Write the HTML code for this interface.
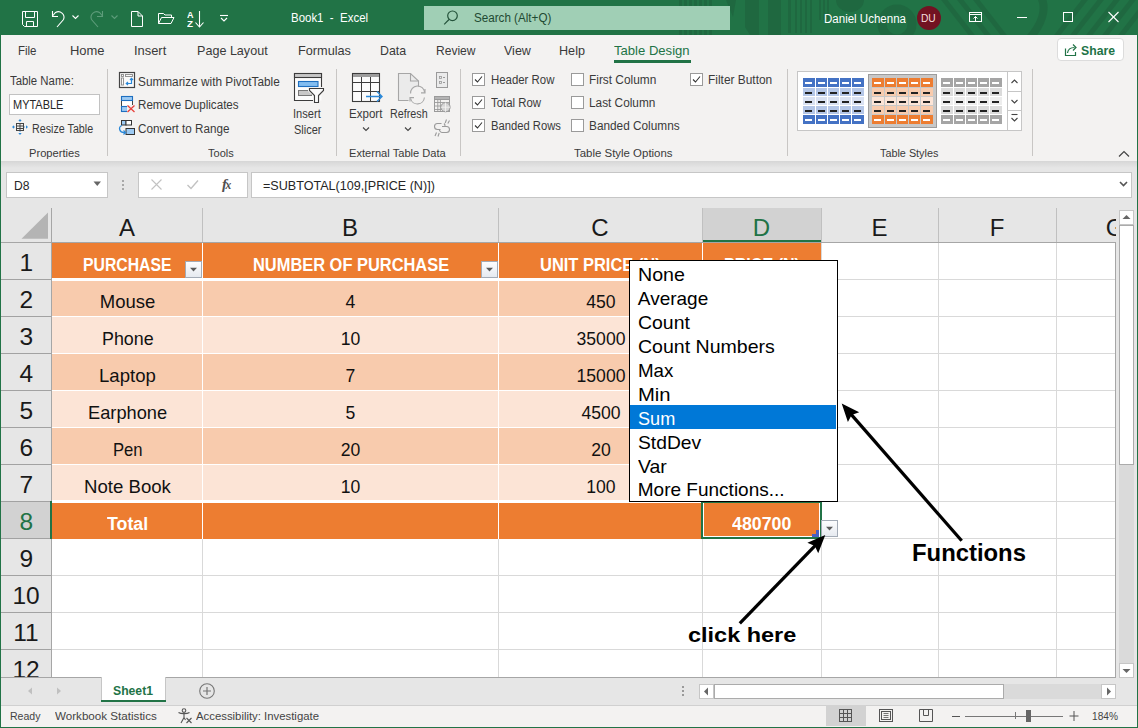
<!DOCTYPE html>
<html><head><meta charset="utf-8"><style>
html,body{margin:0;padding:0;}
body{width:1138px;height:728px;position:relative;overflow:hidden;background:#fff;font-family:"Liberation Sans",sans-serif;}
.t{position:absolute;white-space:pre;}
.r{position:absolute;}
svg.r{overflow:visible;}
</style></head><body>
<div class="r" style="left:0px;top:0px;width:1138px;height:35px;background:#217346"></div>
<div class="r" style="left:679px;top:0px;width:2.5px;height:35px;background:#1f6840"></div>
<div class="r" style="left:684px;top:0px;width:2.5px;height:35px;background:#1f6840"></div>
<div class="r" style="left:689px;top:0px;width:2.5px;height:35px;background:#1f6840"></div>
<div class="r" style="left:694px;top:0px;width:2.5px;height:35px;background:#1f6840"></div>
<div class="r" style="left:699px;top:0px;width:2.5px;height:35px;background:#1f6840"></div>
<div class="r" style="left:704px;top:0px;width:2.5px;height:35px;background:#1f6840"></div>
<div class="r" style="left:709px;top:0px;width:2.5px;height:35px;background:#1f6840"></div>
<svg class="r" style="left:726px;top:0px;" width="10" height="17" viewBox="0 0 10 17"><polygon points="0,0 10,0 7,17" fill="#1f6840"/></svg>
<svg class="r" style="left:744px;top:0px;" width="15" height="35" viewBox="0 0 15 35"><polygon points="1,0 15,0 15,35 6,35 1,27" fill="#1f6840"/></svg>
<div class="r" style="left:768px;top:0px;width:13px;height:35px;background:#1f6840"></div>
<div class="r" style="left:788px;top:0px;width:2.5px;height:33px;background:#1f6840"></div>
<div class="r" style="left:794.5px;top:0px;width:2.5px;height:33px;background:#1f6840"></div>
<div class="r" style="left:799.5px;top:0px;width:2.5px;height:33px;background:#1f6840"></div>
<div class="r" style="left:804.5px;top:0px;width:2.5px;height:33px;background:#1f6840"></div>
<div class="r" style="left:809.5px;top:0px;width:2.5px;height:33px;background:#1f6840"></div>
<div class="r" style="left:819px;top:0px;width:2px;height:20px;background:#1f6840"></div>
<div class="r" style="left:823px;top:0px;width:2px;height:20px;background:#1f6840"></div>
<div class="r" style="left:827px;top:0px;width:2px;height:20px;background:#1f6840"></div>
<svg class="r" style="left:836px;top:0px;" width="28" height="12" viewBox="0 0 28 12"><path d="M0,0 A14,12 0 0 0 28,0 Z" fill="#1f6840"/></svg>
<svg class="r" style="left:870px;top:0px;" width="60" height="35" viewBox="0 0 60 35"><circle cx="27" cy="24" r="15" fill="none" stroke="#1f6840" stroke-width="9"/></svg>
<svg class="r" style="left:940px;top:0px;" width="80" height="35" viewBox="0 0 80 35"><line x1="2" y1="-3" x2="34" y2="38" stroke="#1f6840" stroke-width="5"/><line x1="18" y1="-3" x2="50" y2="38" stroke="#1f6840" stroke-width="5"/><line x1="34" y1="-3" x2="66" y2="38" stroke="#1f6840" stroke-width="5"/></svg>
<svg class="r" style="left:1000px;top:0px;" width="70" height="35" viewBox="0 0 70 35"><path d="M40,-5 C48,8 42,25 28,40" fill="none" stroke="#1f6840" stroke-width="8"/></svg>
<svg class="r" style="left:1055px;top:0px;" width="83" height="35" viewBox="0 0 83 35"><line x1="0" y1="38" x2="32" y2="-3" stroke="#1f6840" stroke-width="5"/><line x1="16" y1="38" x2="48" y2="-3" stroke="#1f6840" stroke-width="5"/><line x1="32" y1="38" x2="64" y2="-3" stroke="#1f6840" stroke-width="5"/><line x1="48" y1="38" x2="80" y2="-3" stroke="#1f6840" stroke-width="5"/><line x1="64" y1="38" x2="96" y2="-3" stroke="#1f6840" stroke-width="5"/></svg>
<svg class="r" style="left:20px;top:9px;" width="20" height="20" viewBox="0 0 20 20"><g fill="none" stroke="#ffffff" stroke-width="1"><path d="M2.5,2.5 H17.5 V17.5 H4.5 L2.5,15.5 Z"/><path d="M5.5,2.5 V8.5 H14.5 V2.5"/><path d="M6.5,17.5 V12.5 H13.5 V17.5"/></g></svg>
<svg class="r" style="left:50px;top:9px;" width="32" height="20" viewBox="0 0 32 20"><g fill="none" stroke="#ffffff" stroke-width="1.1"><path d="M7,18 L13.5,10.5 A5.6,5.6 0 0 0 5.5,3.5 L2.5,7"/><path d="M2.5,2 V7.5 H8"/><path d="M22.5,6.5 L25.5,9.5 L28.5,6.5"/></g></svg>
<svg class="r" style="left:89px;top:9px;" width="32" height="20" viewBox="0 0 32 20"><g fill="none" stroke="#5d9c7a" stroke-width="1.1"><path d="M9,18 L2.5,10.5 A5.6,5.6 0 0 1 10.5,3.5 L13.5,7"/><path d="M13.5,2 V7.5 H8"/><path d="M22.5,6.5 L25.5,9.5 L28.5,6.5"/></g></svg>
<svg class="r" style="left:129px;top:9px;" width="18" height="20" viewBox="0 0 18 20"><g fill="none" stroke="#ffffff" stroke-width="1"><path d="M2.5,2.5 H9 L13.5,7 V17.5 H2.5 Z"/><path d="M9,2.5 V7 H13.5"/></g></svg>
<svg class="r" style="left:156px;top:11px;" width="20" height="16" viewBox="0 0 20 16"><g fill="none" stroke="#ffffff" stroke-width="1"><path d="M2.5,12.5 V2.5 H7.5 L9,4 H15.5 V6.5"/><path d="M2.5,12.5 L5.5,6.5 H18 L15,12.5 Z"/></g></svg>
<div class="t" style="left:187.30px;top:10.00px;font-size:9.5px;line-height:10.61px;color:#ffffff;font-weight:bold;transform:scaleX(0.9503);transform-origin:0 0;">A</div>
<div class="t" style="left:187.30px;top:19.00px;font-size:9.5px;line-height:10.61px;color:#ffffff;font-weight:bold;transform:scaleX(1.0354);transform-origin:0 0;">Z</div>
<svg class="r" style="left:194px;top:9px;" width="12" height="20" viewBox="0 0 12 20"><g fill="none" stroke="#ffffff" stroke-width="1.1"><path d="M5.5,2 V18"/><path d="M1.5,13.5 L5.5,18 L9.5,13.5"/></g></svg>
<svg class="r" style="left:218px;top:12px;" width="12" height="12" viewBox="0 0 12 12"><g fill="none" stroke="#ffffff" stroke-width="1.1"><path d="M2,3.5 H10"/><path d="M3,6 L6,9 L9,6"/></g></svg>
<div class="t" style="left:291.00px;top:12.00px;font-size:12.5px;line-height:13.96px;color:#ffffff;font-weight:normal;transform:scaleX(0.9167);transform-origin:0 0;">Book1  -  Excel</div>
<div class="r" style="left:424px;top:6px;width:306px;height:24px;background:#a0cfb5"></div>
<svg class="r" style="left:440px;top:8px;" width="22" height="20" viewBox="0 0 22 20"><g fill="none" stroke="#23523a" stroke-width="1.2"><circle cx="12.5" cy="7.8" r="4.8"/><path d="M9,11.5 L4.2,16.4"/></g></svg>
<div class="t" style="left:474.20px;top:12.00px;font-size:12.5px;line-height:13.96px;color:#1f4a33;font-weight:normal;transform:scaleX(0.9313);transform-origin:0 0;">Search (Alt+Q)</div>
<div class="t" style="left:824.00px;top:13.00px;font-size:12.5px;line-height:13.96px;color:#ffffff;font-weight:normal;transform:scaleX(0.9213);transform-origin:0 0;">Daniel Uchenna</div>
<svg class="r" style="left:917px;top:6px;" width="24" height="24" viewBox="0 0 24 24"><circle cx="12" cy="12" r="12" fill="#721222"/></svg>
<div class="t" style="left:921.00px;top:13.00px;font-size:10.5px;line-height:11.73px;color:#f4dede;font-weight:normal;transform:scaleX(0.9722);transform-origin:0 0;">DU</div>
<svg class="r" style="left:967px;top:10px;" width="18" height="14" viewBox="0 0 18 14"><g fill="none" stroke="#ffffff" stroke-width="1"><rect x="2.5" y="2.5" width="12" height="9"/><path d="M2.5,4.5 H14.5"/><path d="M8.5,11 V6.5"/><path d="M6.5,8.5 L8.5,6.5 L10.5,8.5"/></g></svg>
<div class="r" style="left:1017px;top:17px;width:10px;height:1px;background:#fff"></div>
<svg class="r" style="left:1061px;top:10px;" width="14" height="14" viewBox="0 0 14 14"><rect x="2.5" y="2.5" width="9" height="9" fill="none" stroke="#ffffff" stroke-width="1"/></svg>
<svg class="r" style="left:1106px;top:10px;" width="16" height="14" viewBox="0 0 16 14"><g stroke="#ffffff" stroke-width="1.1"><path d="M2.5,2 L12.5,12"/><path d="M12.5,2 L2.5,12"/></g></svg>
<div class="r" style="left:0px;top:35px;width:1138px;height:126px;background:#f3f2f1"></div>
<div class="t" style="left:17.80px;top:44.00px;font-size:13px;line-height:14.52px;color:#3a3a3a;font-weight:normal;transform:scaleX(0.8839);transform-origin:0 0;">File</div>
<div class="t" style="left:70.00px;top:44.00px;font-size:13px;line-height:14.52px;color:#3a3a3a;font-weight:normal;transform:scaleX(0.9968);transform-origin:0 0;">Home</div>
<div class="t" style="left:133.80px;top:44.00px;font-size:13px;line-height:14.52px;color:#3a3a3a;font-weight:normal;transform:scaleX(0.9908);transform-origin:0 0;">Insert</div>
<div class="t" style="left:197.00px;top:44.00px;font-size:13px;line-height:14.52px;color:#3a3a3a;font-weight:normal;transform:scaleX(0.9677);transform-origin:0 0;">Page Layout</div>
<div class="t" style="left:298.00px;top:44.00px;font-size:13px;line-height:14.52px;color:#3a3a3a;font-weight:normal;transform:scaleX(0.9777);transform-origin:0 0;">Formulas</div>
<div class="t" style="left:380.40px;top:44.00px;font-size:13px;line-height:14.52px;color:#3a3a3a;font-weight:normal;transform:scaleX(0.9507);transform-origin:0 0;">Data</div>
<div class="t" style="left:436.00px;top:44.00px;font-size:13px;line-height:14.52px;color:#3a3a3a;font-weight:normal;transform:scaleX(0.9259);transform-origin:0 0;">Review</div>
<div class="t" style="left:504.00px;top:44.00px;font-size:13px;line-height:14.52px;color:#3a3a3a;font-weight:normal;transform:scaleX(0.9615);transform-origin:0 0;">View</div>
<div class="t" style="left:559.00px;top:44.00px;font-size:13px;line-height:14.52px;color:#3a3a3a;font-weight:normal;transform:scaleX(0.9709);transform-origin:0 0;">Help</div>
<div class="t" style="left:614.00px;top:44.00px;font-size:13px;line-height:14.52px;color:#217346;font-weight:normal;transform:scaleX(1.0061);transform-origin:0 0;">Table Design</div>
<div class="r" style="left:614px;top:60px;width:77px;height:3px;background:#217346"></div>
<div class="r" style="left:1057px;top:38px;width:67px;height:23px;background:#fff;border:1px solid #dcdcdc;border-radius:4px;box-sizing:border-box"></div>
<svg class="r" style="left:1063px;top:42px;" width="16" height="16" viewBox="0 0 16 16"><g fill="none" stroke="#217346" stroke-width="1.2"><path d="M2.5,6.5 V13.5 H12.5 V10"/><path d="M4.5,11 C5,7 8,5.5 11.5,5.5"/><path d="M10,2.5 L13,5.5 L10,8.5"/></g></svg>
<div class="t" style="left:1081.00px;top:43.00px;font-size:13.5px;line-height:15.08px;color:#217346;font-weight:bold;transform:scaleX(0.9059);transform-origin:0 0;">Share</div>
<div class="r" style="left:107px;top:69px;width:1px;height:87px;background:#c8c6c4"></div>
<div class="r" style="left:336px;top:69px;width:1px;height:87px;background:#c8c6c4"></div>
<div class="r" style="left:460px;top:69px;width:1px;height:87px;background:#c8c6c4"></div>
<div class="r" style="left:787px;top:69px;width:1px;height:87px;background:#c8c6c4"></div>
<div class="r" style="left:1032px;top:69px;width:1px;height:87px;background:#c8c6c4"></div>
<div class="t" style="left:9.60px;top:75.00px;font-size:12.5px;line-height:13.96px;color:#3a3a3a;font-weight:normal;transform:scaleX(0.9098);transform-origin:0 0;">Table Name:</div>
<div class="r" style="left:9px;top:94px;width:91px;height:21px;background:#fff;border:1px solid #c2c2c2;box-sizing:border-box"></div>
<div class="t" style="left:12.60px;top:99.00px;font-size:12.5px;line-height:13.96px;color:#262626;font-weight:normal;transform:scaleX(0.8784);transform-origin:0 0;">MYTABLE</div>
<svg class="r" style="left:11px;top:118px;" width="18" height="18" viewBox="0 0 18 18"><g fill="none" stroke="#444" stroke-width="1"><rect x="5.5" y="5.5" width="7" height="7"/><path d="M5.5,8 H12.5 M5.5,10.5 H12.5 M9,5.5 V12.5"/></g><g fill="#2b88d8"><path d="M9,1 L7.3,3 H10.7Z"/><path d="M9,17 L7.3,15 H10.7Z"/><path d="M1,9 L3,7.3 V10.7Z"/><path d="M17,9 L15,7.3 V10.7Z"/></g><g stroke="#2b88d8" stroke-width="0.8" stroke-dasharray="1,1"><path d="M9,3 V5 M9,13 V15 M3,9 H5 M13,9 H15"/></g></svg>
<div class="t" style="left:31.50px;top:123.00px;font-size:12.5px;line-height:13.96px;color:#3a3a3a;font-weight:normal;transform:scaleX(0.8574);transform-origin:0 0;">Resize Table</div>
<div class="t" style="left:28.50px;top:146.00px;font-size:11.7px;line-height:13.07px;color:#3a3a3a;font-weight:normal;transform:scaleX(0.9540);transform-origin:0 0;">Properties</div>
<svg class="r" style="left:112px;top:68px;" width="30" height="72" viewBox="0 0 30 72"><rect x="7.5" y="4.5" width="15" height="15" fill="#fafafa" stroke="#444" stroke-width="1.2"/><rect x="9.5" y="6.5" width="2" height="2" fill="none" stroke="#8a8a8a" stroke-width="0.9"/><rect x="13.5" y="6.5" width="7" height="2" fill="none" stroke="#8a8a8a" stroke-width="0.9"/><rect x="9.5" y="10" width="2" height="7" fill="none" stroke="#8a8a8a" stroke-width="0.9"/><g fill="none" stroke="#2b88d8" stroke-width="1.2"><path d="M19.5,10.5 V15.5 H14.5"/><path d="M18,12 L19.5,10.3 L21,12"/><path d="M16,14 L14.3,15.5 L16,17"/></g><rect x="9.5" y="28.5" width="11" height="15" fill="#fff" stroke="#444" stroke-width="1"/><rect x="9.5" y="28.5" width="11" height="4" fill="#9ccaf3" stroke="#1e6fc0" stroke-width="1.1"/><rect x="9.5" y="38.5" width="6" height="5" fill="#9ccaf3" stroke="#1e6fc0" stroke-width="1.1"/><rect x="15" y="37" width="9" height="8" fill="#f3f2f1"/><path d="M15.5,37.5 L22.5,44 M22.5,37.5 L15.5,44" stroke="#e8413b" stroke-width="1.3"/><rect x="9.5" y="52.5" width="4.5" height="4.5" fill="#9ccaf3" stroke="#333"/><rect x="14" y="52.5" width="5.5" height="4.5" fill="#fff" stroke="#333"/><rect x="14" y="60.5" width="8.5" height="6" fill="#9ccaf3" stroke="#333"/><path d="M10,57.5 C6,59 7,65 13,64.5" fill="none" stroke="#2b88d8" stroke-width="1.3"/><path d="M11.5,62.5 L13.5,64.5 L11.5,66.5" fill="none" stroke="#2b88d8" stroke-width="1.3"/></svg>
<div class="t" style="left:138.30px;top:76.00px;font-size:12.5px;line-height:13.96px;color:#3a3a3a;font-weight:normal;transform:scaleX(0.9447);transform-origin:0 0;">Summarize with PivotTable</div>
<div class="t" style="left:138.30px;top:99.00px;font-size:12.5px;line-height:13.96px;color:#3a3a3a;font-weight:normal;transform:scaleX(0.9283);transform-origin:0 0;">Remove Duplicates</div>
<div class="t" style="left:138.30px;top:123.00px;font-size:12.5px;line-height:13.96px;color:#3a3a3a;font-weight:normal;transform:scaleX(0.9337);transform-origin:0 0;">Convert to Range</div>
<svg class="r" style="left:285px;top:66px;" width="42" height="40" viewBox="0 0 42 40"><rect x="9.5" y="7.5" width="27" height="27" fill="#fcfcfc"/><path d="M28,34.5 H9.5 V7.5 H36.5 V21" fill="none" stroke="#3c3c3c" stroke-width="1.1"/><rect x="9.5" y="7.5" width="27" height="4" fill="#c8c8c8" stroke="#3c3c3c" stroke-width="1.1"/><rect x="13.5" y="15.5" width="19.5" height="5" fill="#83bdf0" stroke="#1e6fc0" stroke-width="1.1"/><rect x="13.5" y="24.5" width="13" height="5" fill="#c8c8c8" stroke="#777" stroke-width="1"/><path d="M24.5,22.5 H38.5 V24.5 L33.5,29.5 V36.5 H29.5 V29.5 L24.5,24.5 Z" fill="#f3f2f1" stroke="#f3f2f1" stroke-width="3"/><path d="M24.5,22.5 H38.5 V24.5 L33.5,29.5 V36.5 H29.5 V29.5 L24.5,24.5 Z" fill="#fafafa" stroke="#3c3c3c" stroke-width="1.1"/></svg>
<div class="t" style="left:293.30px;top:108.00px;font-size:12.5px;line-height:13.96px;color:#3a3a3a;font-weight:normal;transform:scaleX(0.8864);transform-origin:0 0;">Insert</div>
<div class="t" style="left:294.00px;top:124.00px;font-size:12.5px;line-height:13.96px;color:#3a3a3a;font-weight:normal;transform:scaleX(0.8768);transform-origin:0 0;">Slicer</div>
<div class="t" style="left:208.30px;top:146.00px;font-size:11.7px;line-height:13.07px;color:#3a3a3a;font-weight:normal;transform:scaleX(0.9427);transform-origin:0 0;">Tools</div>
<svg class="r" style="left:350px;top:71px;" width="36" height="34" viewBox="0 0 36 34"><rect x="2.5" y="2.5" width="27" height="28" fill="#fbfbfb" stroke="#3c3c3c" stroke-width="1.1"/><rect x="3" y="3" width="26" height="3" fill="#9c9c9c"/><path d="M2.5,11.5 H29.5 M2.5,20.5 H29.5 M11.5,6 V30.5 M20.5,6 V30.5" stroke="#3c3c3c" stroke-width="1"/><path d="M16,25.5 H32 M27,20.5 L32,25.5 L27,30.5" fill="none" stroke="#2b88d8" stroke-width="1.4"/></svg>
<div class="t" style="left:349.40px;top:108.00px;font-size:12.5px;line-height:13.96px;color:#3a3a3a;font-weight:normal;transform:scaleX(0.9246);transform-origin:0 0;">Export</div>
<svg class="r" style="left:360px;top:124px;" width="12" height="10" viewBox="0 0 12 10"><path d="M3,3.5 L6,6.5 L9,3.5" fill="none" stroke="#444" stroke-width="1.1"/></svg>
<svg class="r" style="left:396px;top:71px;" width="34" height="34" viewBox="0 0 34 34"><path d="M2.5,2.5 H14.5 L22.5,10 V29.5 H2.5 Z" fill="#ebebeb"/><circle cx="21.5" cy="24.3" r="8" fill="#f3f2f1"/><path d="M22.5,15.5 V10 L14.5,2.5 H2.5 V29.5 H12.5" fill="none" stroke="#a6a6a6" stroke-width="1.1"/><path d="M14.5,2.5 V10 H22.5" fill="none" stroke="#a6a6a6" stroke-width="1.1"/><g fill="none" stroke="#a6a6a6" stroke-width="1.1"><path d="M14.6,22.5 A7,7 0 0 1 28.6,21.5"/><path d="M28.4,26.5 A7,7 0 0 1 14.6,27.5"/><path d="M25,21.9 H29 V17.9"/><path d="M18,26.6 H14 V30.6"/></g></svg>
<div class="t" style="left:389.70px;top:108.00px;font-size:12.5px;line-height:13.96px;color:#3a3a3a;font-weight:normal;transform:scaleX(0.8617);transform-origin:0 0;">Refresh</div>
<svg class="r" style="left:402px;top:124px;" width="12" height="10" viewBox="0 0 12 10"><path d="M3,3.5 L6,6.5 L9,3.5" fill="none" stroke="#444" stroke-width="1.1"/></svg>
<svg class="r" style="left:434px;top:70px;" width="18" height="20" viewBox="0 0 18 20"><rect x="2.5" y="2.5" width="11" height="15" fill="#ebebeb" stroke="#9a9a9a"/><rect x="5.5" y="6.5" width="2" height="2" fill="none" stroke="#9a9a9a" stroke-width="0.8"/><rect x="5.5" y="11.5" width="2" height="2" fill="none" stroke="#9a9a9a" stroke-width="0.8"/><path d="M9,7.5 H11 M9,12.5 H11" stroke="#9a9a9a"/></svg>
<svg class="r" style="left:432px;top:94px;" width="20" height="20" viewBox="0 0 20 20"><rect x="2.5" y="2.5" width="15" height="15" fill="#f3f2f1" stroke="#9a9a9a"/><rect x="2.5" y="2.5" width="15" height="3" fill="#b4b4b4" stroke="#9a9a9a"/><path d="M2.5,8.5 H17.5 M2.5,12 H11 M2.5,15.5 H10 M5.8,5.5 V17.5 M8.4,5.5 V17.5" stroke="#9a9a9a" stroke-width="0.9"/><circle cx="13.5" cy="13.2" r="4.6" fill="#d6d6d6" stroke="#9a9a9a"/><path d="M9,13.2 H18 M13.5,8.6 V17.8" stroke="#f3f2f1" stroke-width="0.9"/></svg>
<svg class="r" style="left:432px;top:118px;" width="20" height="20" viewBox="0 0 20 20"><g fill="none" stroke="#9a9a9a" stroke-width="1.1"><path d="M9.5,5.5 H5.5 A3,3 0 0 0 5.5,11.5 H8.5"/><path d="M10,8.5 H14.5 A3,3 0 0 1 14.5,14.5 H10 A3,3 0 0 1 7.5,11"/><path d="M12,5.5 A3,3 0 0 1 13,8"/><path d="M14.5,1.5 L13.2,5 M17.5,2.5 L15.8,5.5 M4.5,14.5 L3,18 M7.2,15 L6,18.5"/></g></svg>
<div class="t" style="left:349.40px;top:146.00px;font-size:11.7px;line-height:13.07px;color:#3a3a3a;font-weight:normal;transform:scaleX(0.9509);transform-origin:0 0;">External Table Data</div>
<div class="r" style="left:472px;top:73px;width:13px;height:13px;background:#fff;border:1px solid #9a9a9a;box-sizing:border-box"></div>
<svg class="r" style="left:472px;top:73px;" width="13" height="13" viewBox="0 0 13 13"><path d="M3,6.5 L5.5,9 L10,3.5" fill="none" stroke="#333" stroke-width="1.1"/></svg>
<div class="t" style="left:490.50px;top:74.00px;font-size:12.5px;line-height:13.96px;color:#3a3a3a;font-weight:normal;transform:scaleX(0.9120);transform-origin:0 0;">Header Row</div>
<div class="r" style="left:472px;top:96px;width:13px;height:13px;background:#fff;border:1px solid #9a9a9a;box-sizing:border-box"></div>
<svg class="r" style="left:472px;top:96px;" width="13" height="13" viewBox="0 0 13 13"><path d="M3,6.5 L5.5,9 L10,3.5" fill="none" stroke="#333" stroke-width="1.1"/></svg>
<div class="t" style="left:490.50px;top:97.00px;font-size:12.5px;line-height:13.96px;color:#3a3a3a;font-weight:normal;transform:scaleX(0.9127);transform-origin:0 0;">Total Row</div>
<div class="r" style="left:472px;top:119px;width:13px;height:13px;background:#fff;border:1px solid #9a9a9a;box-sizing:border-box"></div>
<svg class="r" style="left:472px;top:119px;" width="13" height="13" viewBox="0 0 13 13"><path d="M3,6.5 L5.5,9 L10,3.5" fill="none" stroke="#333" stroke-width="1.1"/></svg>
<div class="t" style="left:490.50px;top:120.00px;font-size:12.5px;line-height:13.96px;color:#3a3a3a;font-weight:normal;transform:scaleX(0.8989);transform-origin:0 0;">Banded Rows</div>
<div class="r" style="left:571px;top:73px;width:13px;height:13px;background:#fff;border:1px solid #9a9a9a;box-sizing:border-box"></div>
<div class="t" style="left:589.00px;top:74.00px;font-size:12.5px;line-height:13.96px;color:#3a3a3a;font-weight:normal;transform:scaleX(0.9496);transform-origin:0 0;">First Column</div>
<div class="r" style="left:571px;top:96px;width:13px;height:13px;background:#fff;border:1px solid #9a9a9a;box-sizing:border-box"></div>
<div class="t" style="left:589.00px;top:97.00px;font-size:12.5px;line-height:13.96px;color:#3a3a3a;font-weight:normal;transform:scaleX(0.9455);transform-origin:0 0;">Last Column</div>
<div class="r" style="left:571px;top:119px;width:13px;height:13px;background:#fff;border:1px solid #9a9a9a;box-sizing:border-box"></div>
<div class="t" style="left:589.00px;top:120.00px;font-size:12.5px;line-height:13.96px;color:#3a3a3a;font-weight:normal;transform:scaleX(0.9450);transform-origin:0 0;">Banded Columns</div>
<div class="r" style="left:690px;top:73px;width:13px;height:13px;background:#fff;border:1px solid #9a9a9a;box-sizing:border-box"></div>
<svg class="r" style="left:690px;top:73px;" width="13" height="13" viewBox="0 0 13 13"><path d="M3,6.5 L5.5,9 L10,3.5" fill="none" stroke="#333" stroke-width="1.1"/></svg>
<div class="t" style="left:708.00px;top:74.00px;font-size:12.5px;line-height:13.96px;color:#3a3a3a;font-weight:normal;transform:scaleX(0.9529);transform-origin:0 0;">Filter Button</div>
<div class="t" style="left:574.00px;top:146.00px;font-size:11.7px;line-height:13.07px;color:#3a3a3a;font-weight:normal;transform:scaleX(0.9786);transform-origin:0 0;">Table Style Options</div>
<div class="r" style="left:797px;top:71px;width:211px;height:60px;background:#fff;border:1px solid #c6c6c6;box-sizing:border-box"></div>
<div class="r" style="left:1007px;top:71px;width:15px;height:21px;background:#fff;border:1px solid #c6c6c6;box-sizing:border-box"></div>
<div class="r" style="left:1007px;top:91px;width:15px;height:20px;background:#fff;border:1px solid #c6c6c6;box-sizing:border-box"></div>
<div class="r" style="left:1007px;top:110px;width:15px;height:21px;background:#fff;border:1px solid #c6c6c6;box-sizing:border-box"></div>
<svg class="r" style="left:1007px;top:71px;" width="15" height="60" viewBox="0 0 15 60"><g fill="none" stroke="#444" stroke-width="1.1"><path d="M4.5,12 L7.5,9 L10.5,12"/><path d="M4.5,29 L7.5,32 L10.5,29"/><path d="M4.5,43.5 H10.5"/><path d="M4.5,47 L7.5,50 L10.5,47"/></g></svg>
<div class="r" style="left:868px;top:74px;width:69px;height:54px;background:#c8c8c8;border:1px solid #9c9c9c;box-sizing:border-box"></div>
<div class="r" style="left:803px;top:78px;width:12px;height:9px;background:#4472c4"></div>
<div class="r" style="left:805px;top:82px;width:7px;height:1.5px;background:#fff"></div>
<div class="r" style="left:816px;top:78px;width:11px;height:9px;background:#4472c4"></div>
<div class="r" style="left:818px;top:82px;width:7px;height:1.5px;background:#fff"></div>
<div class="r" style="left:828px;top:78px;width:11px;height:9px;background:#4472c4"></div>
<div class="r" style="left:830px;top:82px;width:7px;height:1.5px;background:#fff"></div>
<div class="r" style="left:840px;top:78px;width:11px;height:9px;background:#4472c4"></div>
<div class="r" style="left:842px;top:82px;width:7px;height:1.5px;background:#fff"></div>
<div class="r" style="left:852px;top:78px;width:12px;height:9px;background:#4472c4"></div>
<div class="r" style="left:854px;top:82px;width:7px;height:1.5px;background:#fff"></div>
<div class="r" style="left:803px;top:88px;width:12px;height:8px;background:#b4c6e7"></div>
<div class="r" style="left:805px;top:92px;width:7px;height:1.5px;background:#222"></div>
<div class="r" style="left:816px;top:88px;width:11px;height:8px;background:#b4c6e7"></div>
<div class="r" style="left:818px;top:92px;width:7px;height:1.5px;background:#222"></div>
<div class="r" style="left:828px;top:88px;width:11px;height:8px;background:#b4c6e7"></div>
<div class="r" style="left:830px;top:92px;width:7px;height:1.5px;background:#222"></div>
<div class="r" style="left:840px;top:88px;width:11px;height:8px;background:#b4c6e7"></div>
<div class="r" style="left:842px;top:92px;width:7px;height:1.5px;background:#222"></div>
<div class="r" style="left:852px;top:88px;width:12px;height:8px;background:#b4c6e7"></div>
<div class="r" style="left:854px;top:92px;width:7px;height:1.5px;background:#222"></div>
<div class="r" style="left:803px;top:97px;width:12px;height:8px;background:#d9e1f2"></div>
<div class="r" style="left:805px;top:101px;width:7px;height:1.5px;background:#222"></div>
<div class="r" style="left:816px;top:97px;width:11px;height:8px;background:#d9e1f2"></div>
<div class="r" style="left:818px;top:101px;width:7px;height:1.5px;background:#222"></div>
<div class="r" style="left:828px;top:97px;width:11px;height:8px;background:#d9e1f2"></div>
<div class="r" style="left:830px;top:101px;width:7px;height:1.5px;background:#222"></div>
<div class="r" style="left:840px;top:97px;width:11px;height:8px;background:#d9e1f2"></div>
<div class="r" style="left:842px;top:101px;width:7px;height:1.5px;background:#222"></div>
<div class="r" style="left:852px;top:97px;width:12px;height:8px;background:#d9e1f2"></div>
<div class="r" style="left:854px;top:101px;width:7px;height:1.5px;background:#222"></div>
<div class="r" style="left:803px;top:106px;width:12px;height:8px;background:#b4c6e7"></div>
<div class="r" style="left:805px;top:110px;width:7px;height:1.5px;background:#222"></div>
<div class="r" style="left:816px;top:106px;width:11px;height:8px;background:#b4c6e7"></div>
<div class="r" style="left:818px;top:110px;width:7px;height:1.5px;background:#222"></div>
<div class="r" style="left:828px;top:106px;width:11px;height:8px;background:#b4c6e7"></div>
<div class="r" style="left:830px;top:110px;width:7px;height:1.5px;background:#222"></div>
<div class="r" style="left:840px;top:106px;width:11px;height:8px;background:#b4c6e7"></div>
<div class="r" style="left:842px;top:110px;width:7px;height:1.5px;background:#222"></div>
<div class="r" style="left:852px;top:106px;width:12px;height:8px;background:#b4c6e7"></div>
<div class="r" style="left:854px;top:110px;width:7px;height:1.5px;background:#222"></div>
<div class="r" style="left:803px;top:115px;width:12px;height:9px;background:#4472c4"></div>
<div class="r" style="left:805px;top:119px;width:7px;height:1.5px;background:#fff"></div>
<div class="r" style="left:816px;top:115px;width:11px;height:9px;background:#4472c4"></div>
<div class="r" style="left:818px;top:119px;width:7px;height:1.5px;background:#fff"></div>
<div class="r" style="left:828px;top:115px;width:11px;height:9px;background:#4472c4"></div>
<div class="r" style="left:830px;top:119px;width:7px;height:1.5px;background:#fff"></div>
<div class="r" style="left:840px;top:115px;width:11px;height:9px;background:#4472c4"></div>
<div class="r" style="left:842px;top:119px;width:7px;height:1.5px;background:#fff"></div>
<div class="r" style="left:852px;top:115px;width:12px;height:9px;background:#4472c4"></div>
<div class="r" style="left:854px;top:119px;width:7px;height:1.5px;background:#fff"></div>
<div class="r" style="left:872px;top:78px;width:12px;height:9px;background:#ed7d31"></div>
<div class="r" style="left:874px;top:82px;width:7px;height:1.5px;background:#fff"></div>
<div class="r" style="left:885px;top:78px;width:11px;height:9px;background:#ed7d31"></div>
<div class="r" style="left:887px;top:82px;width:7px;height:1.5px;background:#fff"></div>
<div class="r" style="left:897px;top:78px;width:11px;height:9px;background:#ed7d31"></div>
<div class="r" style="left:899px;top:82px;width:7px;height:1.5px;background:#fff"></div>
<div class="r" style="left:909px;top:78px;width:11px;height:9px;background:#ed7d31"></div>
<div class="r" style="left:911px;top:82px;width:7px;height:1.5px;background:#fff"></div>
<div class="r" style="left:921px;top:78px;width:12px;height:9px;background:#ed7d31"></div>
<div class="r" style="left:923px;top:82px;width:7px;height:1.5px;background:#fff"></div>
<div class="r" style="left:872px;top:88px;width:12px;height:8px;background:#f8cbad"></div>
<div class="r" style="left:874px;top:92px;width:7px;height:1.5px;background:#222"></div>
<div class="r" style="left:885px;top:88px;width:11px;height:8px;background:#f8cbad"></div>
<div class="r" style="left:887px;top:92px;width:7px;height:1.5px;background:#222"></div>
<div class="r" style="left:897px;top:88px;width:11px;height:8px;background:#f8cbad"></div>
<div class="r" style="left:899px;top:92px;width:7px;height:1.5px;background:#222"></div>
<div class="r" style="left:909px;top:88px;width:11px;height:8px;background:#f8cbad"></div>
<div class="r" style="left:911px;top:92px;width:7px;height:1.5px;background:#222"></div>
<div class="r" style="left:921px;top:88px;width:12px;height:8px;background:#f8cbad"></div>
<div class="r" style="left:923px;top:92px;width:7px;height:1.5px;background:#222"></div>
<div class="r" style="left:872px;top:97px;width:12px;height:8px;background:#fce4d6"></div>
<div class="r" style="left:874px;top:101px;width:7px;height:1.5px;background:#222"></div>
<div class="r" style="left:885px;top:97px;width:11px;height:8px;background:#fce4d6"></div>
<div class="r" style="left:887px;top:101px;width:7px;height:1.5px;background:#222"></div>
<div class="r" style="left:897px;top:97px;width:11px;height:8px;background:#fce4d6"></div>
<div class="r" style="left:899px;top:101px;width:7px;height:1.5px;background:#222"></div>
<div class="r" style="left:909px;top:97px;width:11px;height:8px;background:#fce4d6"></div>
<div class="r" style="left:911px;top:101px;width:7px;height:1.5px;background:#222"></div>
<div class="r" style="left:921px;top:97px;width:12px;height:8px;background:#fce4d6"></div>
<div class="r" style="left:923px;top:101px;width:7px;height:1.5px;background:#222"></div>
<div class="r" style="left:872px;top:106px;width:12px;height:8px;background:#f8cbad"></div>
<div class="r" style="left:874px;top:110px;width:7px;height:1.5px;background:#222"></div>
<div class="r" style="left:885px;top:106px;width:11px;height:8px;background:#f8cbad"></div>
<div class="r" style="left:887px;top:110px;width:7px;height:1.5px;background:#222"></div>
<div class="r" style="left:897px;top:106px;width:11px;height:8px;background:#f8cbad"></div>
<div class="r" style="left:899px;top:110px;width:7px;height:1.5px;background:#222"></div>
<div class="r" style="left:909px;top:106px;width:11px;height:8px;background:#f8cbad"></div>
<div class="r" style="left:911px;top:110px;width:7px;height:1.5px;background:#222"></div>
<div class="r" style="left:921px;top:106px;width:12px;height:8px;background:#f8cbad"></div>
<div class="r" style="left:923px;top:110px;width:7px;height:1.5px;background:#222"></div>
<div class="r" style="left:872px;top:115px;width:12px;height:9px;background:#ed7d31"></div>
<div class="r" style="left:874px;top:119px;width:7px;height:1.5px;background:#fff"></div>
<div class="r" style="left:885px;top:115px;width:11px;height:9px;background:#ed7d31"></div>
<div class="r" style="left:887px;top:119px;width:7px;height:1.5px;background:#fff"></div>
<div class="r" style="left:897px;top:115px;width:11px;height:9px;background:#ed7d31"></div>
<div class="r" style="left:899px;top:119px;width:7px;height:1.5px;background:#fff"></div>
<div class="r" style="left:909px;top:115px;width:11px;height:9px;background:#ed7d31"></div>
<div class="r" style="left:911px;top:119px;width:7px;height:1.5px;background:#fff"></div>
<div class="r" style="left:921px;top:115px;width:12px;height:9px;background:#ed7d31"></div>
<div class="r" style="left:923px;top:119px;width:7px;height:1.5px;background:#fff"></div>
<div class="r" style="left:941px;top:78px;width:12px;height:9px;background:#a5a5a5"></div>
<div class="r" style="left:943px;top:82px;width:7px;height:1.5px;background:#fff"></div>
<div class="r" style="left:954px;top:78px;width:11px;height:9px;background:#a5a5a5"></div>
<div class="r" style="left:956px;top:82px;width:7px;height:1.5px;background:#fff"></div>
<div class="r" style="left:966px;top:78px;width:11px;height:9px;background:#a5a5a5"></div>
<div class="r" style="left:968px;top:82px;width:7px;height:1.5px;background:#fff"></div>
<div class="r" style="left:978px;top:78px;width:11px;height:9px;background:#a5a5a5"></div>
<div class="r" style="left:980px;top:82px;width:7px;height:1.5px;background:#fff"></div>
<div class="r" style="left:990px;top:78px;width:12px;height:9px;background:#a5a5a5"></div>
<div class="r" style="left:992px;top:82px;width:7px;height:1.5px;background:#fff"></div>
<div class="r" style="left:941px;top:88px;width:12px;height:8px;background:#dbdbdb"></div>
<div class="r" style="left:943px;top:92px;width:7px;height:1.5px;background:#222"></div>
<div class="r" style="left:954px;top:88px;width:11px;height:8px;background:#dbdbdb"></div>
<div class="r" style="left:956px;top:92px;width:7px;height:1.5px;background:#222"></div>
<div class="r" style="left:966px;top:88px;width:11px;height:8px;background:#dbdbdb"></div>
<div class="r" style="left:968px;top:92px;width:7px;height:1.5px;background:#222"></div>
<div class="r" style="left:978px;top:88px;width:11px;height:8px;background:#dbdbdb"></div>
<div class="r" style="left:980px;top:92px;width:7px;height:1.5px;background:#222"></div>
<div class="r" style="left:990px;top:88px;width:12px;height:8px;background:#dbdbdb"></div>
<div class="r" style="left:992px;top:92px;width:7px;height:1.5px;background:#222"></div>
<div class="r" style="left:941px;top:97px;width:12px;height:8px;background:#ededed"></div>
<div class="r" style="left:943px;top:101px;width:7px;height:1.5px;background:#222"></div>
<div class="r" style="left:954px;top:97px;width:11px;height:8px;background:#ededed"></div>
<div class="r" style="left:956px;top:101px;width:7px;height:1.5px;background:#222"></div>
<div class="r" style="left:966px;top:97px;width:11px;height:8px;background:#ededed"></div>
<div class="r" style="left:968px;top:101px;width:7px;height:1.5px;background:#222"></div>
<div class="r" style="left:978px;top:97px;width:11px;height:8px;background:#ededed"></div>
<div class="r" style="left:980px;top:101px;width:7px;height:1.5px;background:#222"></div>
<div class="r" style="left:990px;top:97px;width:12px;height:8px;background:#ededed"></div>
<div class="r" style="left:992px;top:101px;width:7px;height:1.5px;background:#222"></div>
<div class="r" style="left:941px;top:106px;width:12px;height:8px;background:#dbdbdb"></div>
<div class="r" style="left:943px;top:110px;width:7px;height:1.5px;background:#222"></div>
<div class="r" style="left:954px;top:106px;width:11px;height:8px;background:#dbdbdb"></div>
<div class="r" style="left:956px;top:110px;width:7px;height:1.5px;background:#222"></div>
<div class="r" style="left:966px;top:106px;width:11px;height:8px;background:#dbdbdb"></div>
<div class="r" style="left:968px;top:110px;width:7px;height:1.5px;background:#222"></div>
<div class="r" style="left:978px;top:106px;width:11px;height:8px;background:#dbdbdb"></div>
<div class="r" style="left:980px;top:110px;width:7px;height:1.5px;background:#222"></div>
<div class="r" style="left:990px;top:106px;width:12px;height:8px;background:#dbdbdb"></div>
<div class="r" style="left:992px;top:110px;width:7px;height:1.5px;background:#222"></div>
<div class="r" style="left:941px;top:115px;width:12px;height:9px;background:#a5a5a5"></div>
<div class="r" style="left:943px;top:119px;width:7px;height:1.5px;background:#fff"></div>
<div class="r" style="left:954px;top:115px;width:11px;height:9px;background:#a5a5a5"></div>
<div class="r" style="left:956px;top:119px;width:7px;height:1.5px;background:#fff"></div>
<div class="r" style="left:966px;top:115px;width:11px;height:9px;background:#a5a5a5"></div>
<div class="r" style="left:968px;top:119px;width:7px;height:1.5px;background:#fff"></div>
<div class="r" style="left:978px;top:115px;width:11px;height:9px;background:#a5a5a5"></div>
<div class="r" style="left:980px;top:119px;width:7px;height:1.5px;background:#fff"></div>
<div class="r" style="left:990px;top:115px;width:12px;height:9px;background:#a5a5a5"></div>
<div class="r" style="left:992px;top:119px;width:7px;height:1.5px;background:#fff"></div>
<div class="t" style="left:880.30px;top:146.00px;font-size:11.7px;line-height:13.07px;color:#3a3a3a;font-weight:normal;transform:scaleX(0.9261);transform-origin:0 0;">Table Styles</div>
<svg class="r" style="left:1116px;top:148px;" width="16" height="12" viewBox="0 0 16 12"><path d="M3,8.5 L8,3.5 L13,8.5" fill="none" stroke="#444" stroke-width="1.2"/></svg>
<div class="r" style="left:0px;top:161px;width:1138px;height:47px;background:#e6e6e6"></div>
<div class="r" style="left:0px;top:161px;width:1138px;height:7px;background:linear-gradient(#d6d6d6,#e6e6e6)"></div>
<div class="r" style="left:6px;top:172px;width:102px;height:26px;background:#fff;border:1px solid #c6c6c6;box-sizing:border-box"></div>
<div class="t" style="left:13.50px;top:180.00px;font-size:12.5px;line-height:13.96px;color:#262626;font-weight:normal;transform:scaleX(0.9688);transform-origin:0 0;">D8</div>
<svg class="r" style="left:90px;top:178px;" width="14" height="12" viewBox="0 0 14 12"><polygon points="3.5,3.5 11,3.5 7.25,8" fill="#666"/></svg>
<div class="r" style="left:122px;top:180px;width:1.5px;height:1.5px;background:#a8a8a8"></div>
<div class="r" style="left:122px;top:184px;width:1.5px;height:1.5px;background:#a8a8a8"></div>
<div class="r" style="left:122px;top:188px;width:1.5px;height:1.5px;background:#a8a8a8"></div>
<div class="r" style="left:138px;top:172px;width:110px;height:26px;background:#fff;border:1px solid #c6c6c6;box-sizing:border-box"></div>
<svg class="r" style="left:149px;top:178px;" width="16" height="14" viewBox="0 0 16 14"><path d="M2.5,1.5 L12.5,11.5 M12.5,1.5 L2.5,11.5" stroke="#c2c2c2" stroke-width="1.1"/></svg>
<svg class="r" style="left:185px;top:178px;" width="16" height="14" viewBox="0 0 16 14"><path d="M2.5,7 L6,10.5 L13,2.5" fill="none" stroke="#c2c2c2" stroke-width="1.4"/></svg>
<div class="t" style="left:222px;top:176px;font-family:'Liberation Serif',serif;font-style:italic;font-weight:bold;font-size:15px;line-height:17px;color:#505050">f<span style="font-size:11.5px;margin-left:-1.5px">x</span></div>
<div class="r" style="left:251px;top:172px;width:881px;height:26px;background:#fff;border:1px solid #c6c6c6;box-sizing:border-box"></div>
<div class="t" style="left:263.20px;top:179.00px;font-size:13px;line-height:14.52px;color:#262626;font-weight:normal;transform:scaleX(0.9675);transform-origin:0 0;">=SUBTOTAL(109,[PRICE (N)])</div>
<svg class="r" style="left:1116px;top:178px;" width="14" height="12" viewBox="0 0 14 12"><path d="M4,4 L7.5,7.5 L11,4" fill="none" stroke="#555" stroke-width="1.6"/></svg>
<div class="r" style="left:1px;top:208px;width:1117px;height:34px;background:#e6e6e6"></div>
<div class="r" style="left:1px;top:242px;width:50px;height:435px;background:#e6e6e6"></div>
<div class="r" style="left:52px;top:243px;width:1063px;height:434px;background:#fff"></div>
<svg class="r" style="left:0px;top:208px;" width="52" height="34" viewBox="0 0 52 34"><polygon points="21.5,30.7 48,4.6 48,30.7" fill="#b4b4b4"/></svg>
<div class="r" style="left:702px;top:208px;width:119px;height:34px;background:#d2d2d2"></div>
<div class="r" style="left:702px;top:240px;width:119px;height:2px;background:#217346"></div>
<div class="r" style="left:51px;top:208px;width:1px;height:34px;background:#c0c0c0"></div>
<div class="r" style="left:202px;top:208px;width:1px;height:34px;background:#c0c0c0"></div>
<div class="r" style="left:498px;top:208px;width:1px;height:34px;background:#c0c0c0"></div>
<div class="r" style="left:702px;top:208px;width:1px;height:34px;background:#c0c0c0"></div>
<div class="r" style="left:821px;top:208px;width:1px;height:34px;background:#c0c0c0"></div>
<div class="r" style="left:938px;top:208px;width:1px;height:34px;background:#c0c0c0"></div>
<div class="r" style="left:1056px;top:208px;width:1px;height:34px;background:#c0c0c0"></div>
<div class="r" style="left:1px;top:242px;width:1115px;height:1px;background:#a6a6a6"></div>
<div class="t" style="left:118.96px;top:215.00px;font-size:24px;line-height:26.81px;color:#1a1a1a;font-weight:normal;">A</div>
<div class="t" style="left:341.96px;top:215.00px;font-size:24px;line-height:26.81px;color:#1a1a1a;font-weight:normal;">B</div>
<div class="t" style="left:591.36px;top:215.00px;font-size:24px;line-height:26.81px;color:#1a1a1a;font-weight:normal;">C</div>
<div class="t" style="left:752.86px;top:215.00px;font-size:24px;line-height:26.81px;color:#217346;font-weight:normal;">D</div>
<div class="t" style="left:871.46px;top:215.00px;font-size:24px;line-height:26.81px;color:#1a1a1a;font-weight:normal;">E</div>
<div class="t" style="left:989.68px;top:215.00px;font-size:24px;line-height:26.81px;color:#1a1a1a;font-weight:normal;">F</div>
<div class="t" style="left:1105.64px;top:215.00px;font-size:24px;line-height:26.81px;color:#1a1a1a;font-weight:normal;">G</div>
<div class="r" style="left:1px;top:501px;width:50px;height:37px;background:#d2d2d2"></div>
<div class="r" style="left:51px;top:208px;width:1px;height:469px;background:#a6a6a6"></div>
<div class="r" style="left:1px;top:279px;width:50px;height:1px;background:#a2a2a2"></div>
<div class="t" style="left:19.44px;top:249.00px;font-size:24.5px;line-height:27.37px;color:#1a1a1a;font-weight:normal;">1</div>
<div class="r" style="left:1px;top:316px;width:50px;height:1px;background:#a2a2a2"></div>
<div class="t" style="left:19.44px;top:286.00px;font-size:24.5px;line-height:27.37px;color:#1a1a1a;font-weight:normal;">2</div>
<div class="r" style="left:1px;top:353px;width:50px;height:1px;background:#a2a2a2"></div>
<div class="t" style="left:19.44px;top:323.00px;font-size:24.5px;line-height:27.37px;color:#1a1a1a;font-weight:normal;">3</div>
<div class="r" style="left:1px;top:390px;width:50px;height:1px;background:#a2a2a2"></div>
<div class="t" style="left:19.44px;top:360.00px;font-size:24.5px;line-height:27.37px;color:#1a1a1a;font-weight:normal;">4</div>
<div class="r" style="left:1px;top:427px;width:50px;height:1px;background:#a2a2a2"></div>
<div class="t" style="left:19.44px;top:397.00px;font-size:24.5px;line-height:27.37px;color:#1a1a1a;font-weight:normal;">5</div>
<div class="r" style="left:1px;top:464px;width:50px;height:1px;background:#a2a2a2"></div>
<div class="t" style="left:19.44px;top:434.00px;font-size:24.5px;line-height:27.37px;color:#1a1a1a;font-weight:normal;">6</div>
<div class="r" style="left:1px;top:501px;width:50px;height:1px;background:#a2a2a2"></div>
<div class="t" style="left:19.44px;top:471.00px;font-size:24.5px;line-height:27.37px;color:#1a1a1a;font-weight:normal;">7</div>
<div class="r" style="left:1px;top:538px;width:50px;height:1px;background:#a2a2a2"></div>
<div class="t" style="left:19.44px;top:508.00px;font-size:24.5px;line-height:27.37px;color:#217346;font-weight:normal;">8</div>
<div class="r" style="left:1px;top:575px;width:50px;height:1px;background:#a2a2a2"></div>
<div class="t" style="left:19.44px;top:545.00px;font-size:24.5px;line-height:27.37px;color:#1a1a1a;font-weight:normal;">9</div>
<div class="r" style="left:1px;top:612px;width:50px;height:1px;background:#a2a2a2"></div>
<div class="t" style="left:12.40px;top:582.00px;font-size:24.5px;line-height:27.37px;color:#1a1a1a;font-weight:normal;">10</div>
<div class="r" style="left:1px;top:649px;width:50px;height:1px;background:#a2a2a2"></div>
<div class="t" style="left:13.26px;top:619.00px;font-size:24.5px;line-height:27.37px;color:#1a1a1a;font-weight:normal;">11</div>
<div class="r" style="left:1px;top:686px;width:50px;height:1px;background:#a2a2a2"></div>
<div class="t" style="left:12.40px;top:656.00px;font-size:24.5px;line-height:27.37px;color:#1a1a1a;font-weight:normal;">12</div>
<div class="r" style="left:50px;top:501px;width:2px;height:38px;background:#217346"></div>
<div class="r" style="left:202px;top:243px;width:1px;height:434px;background:#d9d9d9"></div>
<div class="r" style="left:498px;top:243px;width:1px;height:434px;background:#d9d9d9"></div>
<div class="r" style="left:702px;top:243px;width:1px;height:434px;background:#d9d9d9"></div>
<div class="r" style="left:821px;top:243px;width:1px;height:434px;background:#d9d9d9"></div>
<div class="r" style="left:938px;top:243px;width:1px;height:434px;background:#d9d9d9"></div>
<div class="r" style="left:1056px;top:243px;width:1px;height:434px;background:#d9d9d9"></div>
<div class="r" style="left:52px;top:279px;width:1063px;height:1px;background:#d9d9d9"></div>
<div class="r" style="left:52px;top:316px;width:1063px;height:1px;background:#d9d9d9"></div>
<div class="r" style="left:52px;top:353px;width:1063px;height:1px;background:#d9d9d9"></div>
<div class="r" style="left:52px;top:390px;width:1063px;height:1px;background:#d9d9d9"></div>
<div class="r" style="left:52px;top:427px;width:1063px;height:1px;background:#d9d9d9"></div>
<div class="r" style="left:52px;top:464px;width:1063px;height:1px;background:#d9d9d9"></div>
<div class="r" style="left:52px;top:501px;width:1063px;height:1px;background:#d9d9d9"></div>
<div class="r" style="left:52px;top:538px;width:1063px;height:1px;background:#d9d9d9"></div>
<div class="r" style="left:52px;top:575px;width:1063px;height:1px;background:#d9d9d9"></div>
<div class="r" style="left:52px;top:612px;width:1063px;height:1px;background:#d9d9d9"></div>
<div class="r" style="left:52px;top:649px;width:1063px;height:1px;background:#d9d9d9"></div>
<div class="r" style="left:52px;top:686px;width:1063px;height:1px;background:#d9d9d9"></div>
<div class="r" style="left:52px;top:243px;width:769px;height:35px;background:#ed7d31"></div>
<div class="r" style="left:52px;top:278px;width:769px;height:3px;background:#fff"></div>
<div class="r" style="left:52px;top:281px;width:769px;height:35px;background:#f8cbad"></div>
<div class="r" style="left:52px;top:316px;width:769px;height:1px;background:#fff"></div>
<div class="r" style="left:52px;top:317px;width:769px;height:36px;background:#fce4d6"></div>
<div class="r" style="left:52px;top:353px;width:769px;height:1px;background:#fff"></div>
<div class="r" style="left:52px;top:354px;width:769px;height:36px;background:#f8cbad"></div>
<div class="r" style="left:52px;top:390px;width:769px;height:1px;background:#fff"></div>
<div class="r" style="left:52px;top:391px;width:769px;height:36px;background:#fce4d6"></div>
<div class="r" style="left:52px;top:427px;width:769px;height:1px;background:#fff"></div>
<div class="r" style="left:52px;top:428px;width:769px;height:36px;background:#f8cbad"></div>
<div class="r" style="left:52px;top:464px;width:769px;height:1px;background:#fff"></div>
<div class="r" style="left:52px;top:465px;width:769px;height:35px;background:#fce4d6"></div>
<div class="r" style="left:52px;top:500px;width:769px;height:3px;background:#fff"></div>
<div class="r" style="left:52px;top:503px;width:769px;height:36px;background:#ed7d31"></div>
<div class="r" style="left:202px;top:243px;width:1px;height:296px;background:#fff"></div>
<div class="r" style="left:498px;top:243px;width:1px;height:296px;background:#fff"></div>
<div class="r" style="left:702px;top:243px;width:1px;height:296px;background:#fff"></div>
<div class="t" style="left:82.50px;top:255.00px;font-size:18.3px;line-height:20.44px;color:#ffffff;font-weight:bold;transform:scaleX(0.8620);transform-origin:0 0;">PURCHASE</div>
<div class="t" style="left:252.60px;top:255.00px;font-size:18.3px;line-height:20.44px;color:#ffffff;font-weight:bold;transform:scaleX(0.8981);transform-origin:0 0;">NUMBER OF PURCHASE</div>
<div class="t" style="left:539.60px;top:255.00px;font-size:18.3px;line-height:20.44px;color:#ffffff;font-weight:bold;transform:scaleX(0.9006);transform-origin:0 0;">UNIT PRICE (N)</div>
<div class="t" style="left:723.50px;top:255.00px;font-size:18.3px;line-height:20.44px;color:#ffffff;font-weight:bold;transform:scaleX(0.8799);transform-origin:0 0;">PRICE (N)</div>
<div class="r" style="left:185px;top:261px;width:17px;height:17px;background:linear-gradient(#fdfdfe,#e6eaf0);border:1px solid #a3abb6;box-sizing:border-box"></div>
<svg class="r" style="left:185px;top:261px;" width="17" height="17" viewBox="0 0 17 17"><polygon points="5,6.8 12,6.8 8.5,10.5" fill="#5a5a5a"/></svg>
<div class="r" style="left:481px;top:261px;width:17px;height:17px;background:linear-gradient(#fdfdfe,#e6eaf0);border:1px solid #a3abb6;box-sizing:border-box"></div>
<svg class="r" style="left:481px;top:261px;" width="17" height="17" viewBox="0 0 17 17"><polygon points="5,6.8 12,6.8 8.5,10.5" fill="#5a5a5a"/></svg>
<div class="r" style="left:686px;top:261px;width:17px;height:17px;background:linear-gradient(#fdfdfe,#e6eaf0);border:1px solid #a3abb6;box-sizing:border-box"></div>
<svg class="r" style="left:686px;top:261px;" width="17" height="17" viewBox="0 0 17 17"><polygon points="5,6.8 12,6.8 8.5,10.5" fill="#5a5a5a"/></svg>
<div class="r" style="left:805px;top:261px;width:17px;height:17px;background:linear-gradient(#fdfdfe,#e6eaf0);border:1px solid #a3abb6;box-sizing:border-box"></div>
<svg class="r" style="left:805px;top:261px;" width="17" height="17" viewBox="0 0 17 17"><polygon points="5,6.8 12,6.8 8.5,10.5" fill="#5a5a5a"/></svg>
<div class="t" style="left:99.75px;top:292.00px;font-size:18.5px;line-height:20.66px;color:#111111;font-weight:normal;">Mouse</div>
<div class="t" style="left:345.57px;top:293.00px;font-size:17.6px;line-height:19.66px;color:#111111;font-weight:normal;">4</div>
<div class="t" style="left:586.30px;top:293.00px;font-size:17.6px;line-height:19.66px;color:#111111;font-weight:normal;">450</div>
<div class="t" style="left:101.70px;top:329.00px;font-size:18.5px;line-height:20.66px;color:#111111;font-weight:normal;transform:scaleX(0.9651);transform-origin:0 0;">Phone</div>
<div class="t" style="left:340.73px;top:330.00px;font-size:17.6px;line-height:19.66px;color:#111111;font-weight:normal;">10</div>
<div class="t" style="left:576.54px;top:330.00px;font-size:17.6px;line-height:19.66px;color:#111111;font-weight:normal;">35000</div>
<div class="t" style="left:99.10px;top:366.00px;font-size:18.5px;line-height:20.66px;color:#111111;font-weight:normal;transform:scaleX(1.0034);transform-origin:0 0;">Laptop</div>
<div class="t" style="left:345.57px;top:367.00px;font-size:17.6px;line-height:19.66px;color:#111111;font-weight:normal;">7</div>
<div class="t" style="left:576.54px;top:367.00px;font-size:17.6px;line-height:19.66px;color:#111111;font-weight:normal;">15000</div>
<div class="t" style="left:87.90px;top:403.00px;font-size:18.5px;line-height:20.66px;color:#111111;font-weight:normal;transform:scaleX(0.9864);transform-origin:0 0;">Earphone</div>
<div class="t" style="left:345.57px;top:404.00px;font-size:17.6px;line-height:19.66px;color:#111111;font-weight:normal;">5</div>
<div class="t" style="left:581.46px;top:404.00px;font-size:17.6px;line-height:19.66px;color:#111111;font-weight:normal;">4500</div>
<div class="t" style="left:112.70px;top:440.00px;font-size:18.5px;line-height:20.66px;color:#111111;font-weight:normal;transform:scaleX(0.8989);transform-origin:0 0;">Pen</div>
<div class="t" style="left:340.73px;top:441.00px;font-size:17.6px;line-height:19.66px;color:#111111;font-weight:normal;">20</div>
<div class="t" style="left:591.23px;top:441.00px;font-size:17.6px;line-height:19.66px;color:#111111;font-weight:normal;">20</div>
<div class="t" style="left:83.95px;top:477.00px;font-size:18.5px;line-height:20.66px;color:#111111;font-weight:normal;transform:scaleX(1.0060);transform-origin:0 0;">Note Book</div>
<div class="t" style="left:340.73px;top:478.00px;font-size:17.6px;line-height:19.66px;color:#111111;font-weight:normal;">10</div>
<div class="t" style="left:586.30px;top:478.00px;font-size:17.6px;line-height:19.66px;color:#111111;font-weight:normal;">100</div>
<div class="t" style="left:106.95px;top:514.00px;font-size:18.3px;line-height:20.44px;color:#ffffff;font-weight:bold;transform:scaleX(0.9723);transform-origin:0 0;">Total</div>
<div class="t" style="left:732.20px;top:514.00px;font-size:18.3px;line-height:20.44px;color:#ffffff;font-weight:bold;transform:scaleX(0.9718);transform-origin:0 0;">480700</div>
<div class="r" style="left:701px;top:501px;width:121px;height:38px;border:2px solid #217346;box-sizing:border-box"></div>
<div class="r" style="left:703px;top:503px;width:117px;height:34px;border:1px solid #fff;border-top:none;box-sizing:border-box"></div>
<div class="r" style="left:816px;top:530px;width:3px;height:7px;background:#4a5fc1"></div>
<div class="r" style="left:812px;top:534px;width:7px;height:3px;background:#4a5fc1"></div>
<div class="r" style="left:821px;top:520px;width:17px;height:17px;background:linear-gradient(#fdfdfe,#e6eaf0);border:1px solid #a3abb6;box-sizing:border-box"></div>
<svg class="r" style="left:821px;top:520px;" width="17" height="17" viewBox="0 0 17 17"><polygon points="5,6.8 12,6.8 8.5,10.5" fill="#5a5a5a"/></svg>
<div class="r" style="left:629px;top:260px;width:209px;height:242px;background:#fff;border:1px solid #000;box-sizing:border-box"></div>
<div class="r" style="left:630px;top:405px;width:206px;height:24px;background:#0078d7"></div>
<div class="t" style="left:637.80px;top:264.00px;font-size:19px;line-height:21.22px;color:#000000;font-weight:normal;transform:scaleX(1.0328);transform-origin:0 0;">None</div>
<div class="t" style="left:637.80px;top:288.00px;font-size:19px;line-height:21.22px;color:#000000;font-weight:normal;">Average</div>
<div class="t" style="left:637.80px;top:312.00px;font-size:19px;line-height:21.22px;color:#000000;font-weight:normal;transform:scaleX(1.0231);transform-origin:0 0;">Count</div>
<div class="t" style="left:637.80px;top:336.00px;font-size:19px;line-height:21.22px;color:#000000;font-weight:normal;transform:scaleX(1.0286);transform-origin:0 0;">Count Numbers</div>
<div class="t" style="left:637.80px;top:360.00px;font-size:19px;line-height:21.22px;color:#000000;font-weight:normal;transform:scaleX(0.9858);transform-origin:0 0;">Max</div>
<div class="t" style="left:637.80px;top:384.00px;font-size:19px;line-height:21.22px;color:#000000;font-weight:normal;transform:scaleX(1.0657);transform-origin:0 0;">Min</div>
<div class="t" style="left:637.80px;top:408.00px;font-size:19px;line-height:21.22px;color:#ffffff;font-weight:normal;transform:scaleX(0.9530);transform-origin:0 0;">Sum</div>
<div class="t" style="left:637.80px;top:432.00px;font-size:19px;line-height:21.22px;color:#000000;font-weight:normal;transform:scaleX(1.0141);transform-origin:0 0;">StdDev</div>
<div class="t" style="left:637.80px;top:456.00px;font-size:19px;line-height:21.22px;color:#000000;font-weight:normal;transform:scaleX(1.0242);transform-origin:0 0;">Var</div>
<div class="t" style="left:637.80px;top:479.00px;font-size:19px;line-height:21.22px;color:#000000;font-weight:normal;">More Functions...</div>
<svg class="r" style="left:0;top:0" width="1138" height="728"><line x1="961.7" y1="540.8" x2="848.3" y2="411.1" stroke="#000" stroke-width="3.2"/><polygon points="841.7,403.6 859.2,412.2 851.6,414.9 847.9,422.1" fill="#000"/></svg>
<svg class="r" style="left:0;top:0" width="1138" height="728"><line x1="739.8" y1="623.3" x2="818.3" y2="542.3" stroke="#000" stroke-width="3.2"/><polygon points="825.3,535.1 818.2,553.2 814.9,545.9 807.4,542.8" fill="#000"/></svg>
<div class="t" style="left:912.20px;top:540.00px;font-size:24px;line-height:26.81px;color:#000;font-weight:bold;transform:scaleX(0.9937);transform-origin:0 0;">Functions</div>
<div class="t" style="left:688.20px;top:623.00px;font-size:21px;line-height:23.46px;color:#000;font-weight:bold;transform:scaleX(1.1177);transform-origin:0 0;">click here</div>
<div class="r" style="left:1115px;top:242px;width:1px;height:436px;background:#a6a6a6"></div>
<div class="r" style="left:1px;top:677px;width:1115px;height:1px;background:#a6a6a6"></div>
<div class="r" style="left:1116px;top:208px;width:21px;height:497px;background:#e6e6e6"></div>
<div class="r" style="left:1119px;top:210px;width:15px;height:467px;background:#dadada"></div>
<div class="r" style="left:1119px;top:210px;width:15px;height:15px;background:#fff;border:1px solid #c6c6c6;box-sizing:border-box"></div>
<svg class="r" style="left:1119px;top:210px;" width="15" height="15" viewBox="0 0 15 15"><polygon points="3.5,9 11.5,9 7.5,5" fill="#666"/></svg>
<div class="r" style="left:1119px;top:225px;width:15px;height:240px;background:#fff;border:1px solid #ababab;box-sizing:border-box"></div>
<div class="r" style="left:1119px;top:663px;width:15px;height:15px;background:#fff;border:1px solid #c6c6c6;box-sizing:border-box"></div>
<svg class="r" style="left:1119px;top:663px;" width="15" height="15" viewBox="0 0 15 15"><polygon points="3.5,6 11.5,6 7.5,10" fill="#666"/></svg>
<div class="r" style="left:1px;top:678px;width:1136px;height:27px;background:#e6e6e6"></div>
<div class="r" style="left:1px;top:705px;width:1136px;height:1px;background:#d0d0d0"></div>
<svg class="r" style="left:25px;top:684px;" width="40" height="14" viewBox="0 0 40 14"><polygon points="7,3.5 3,7 7,10.5" fill="#c0c0c0"/><polygon points="32,3.5 36,7 32,10.5" fill="#c0c0c0"/></svg>
<div class="r" style="left:101px;top:677px;width:65px;height:25px;background:#fff;border-left:1px solid #c6c6c6;border-right:1px solid #c6c6c6;box-sizing:border-box"></div>
<div class="r" style="left:101px;top:700px;width:65px;height:2px;background:#217346"></div>
<div class="t" style="left:113.00px;top:683.00px;font-size:13.5px;line-height:15.08px;color:#217346;font-weight:bold;transform:scaleX(0.9033);transform-origin:0 0;">Sheet1</div>
<svg class="r" style="left:197px;top:682px;" width="20" height="18" viewBox="0 0 20 18"><circle cx="10" cy="9" r="7.3" fill="none" stroke="#777" stroke-width="1.1"/><path d="M10,5 V13 M6,9 H14" stroke="#777" stroke-width="1.2"/></svg>
<div class="r" style="left:682px;top:686px;width:2px;height:2px;background:#999"></div>
<div class="r" style="left:682px;top:690px;width:2px;height:2px;background:#999"></div>
<div class="r" style="left:682px;top:694px;width:2px;height:2px;background:#999"></div>
<div class="r" style="left:699px;top:684px;width:15px;height:15px;background:#fff;border:1px solid #c6c6c6;box-sizing:border-box"></div>
<svg class="r" style="left:699px;top:684px;" width="15" height="15" viewBox="0 0 15 15"><polygon points="9,3.5 9,11.5 5,7.5" fill="#666"/></svg>
<div class="r" style="left:714px;top:684px;width:290px;height:15px;background:#fff;border:1px solid #ababab;box-sizing:border-box"></div>
<div class="r" style="left:1004px;top:684px;width:97px;height:15px;background:#dadada"></div>
<div class="r" style="left:1101px;top:684px;width:15px;height:15px;background:#fff;border:1px solid #c6c6c6;box-sizing:border-box"></div>
<svg class="r" style="left:1101px;top:684px;" width="15" height="15" viewBox="0 0 15 15"><polygon points="6,3.5 6,11.5 10,7.5" fill="#666"/></svg>
<div class="r" style="left:1px;top:706px;width:1136px;height:21px;background:#f3f2f1"></div>
<div class="t" style="left:9.50px;top:710.00px;font-size:11.5px;line-height:12.85px;color:#444444;font-weight:normal;transform:scaleX(0.9177);transform-origin:0 0;">Ready</div>
<div class="t" style="left:55.30px;top:710.00px;font-size:11.5px;line-height:12.85px;color:#444444;font-weight:normal;transform:scaleX(1.0105);transform-origin:0 0;">Workbook Statistics</div>
<svg class="r" style="left:176px;top:708px;" width="18" height="16" viewBox="0 0 18 16"><g fill="none" stroke="#555" stroke-width="1.1"><circle cx="8" cy="2.6" r="1.8"/><path d="M2.5,4.5 C5,6 11,6 13.5,4.5"/><path d="M8,6 V9.5 L5,15 M8,9.5 L9.5,12"/><path d="M10.5,10 L15.5,15 M15.5,10 L10.5,15"/></g></svg>
<div class="t" style="left:196.00px;top:710.00px;font-size:11.5px;line-height:12.85px;color:#444444;font-weight:normal;transform:scaleX(0.9867);transform-origin:0 0;">Accessibility: Investigate</div>
<div class="r" style="left:826px;top:705px;width:40px;height:21px;background:#d2d2d2"></div>
<svg class="r" style="left:836px;top:707px;" width="20" height="18" viewBox="0 0 20 18"><g fill="none" stroke="#555" stroke-width="1"><rect x="3.5" y="2.5" width="12" height="12"/><path d="M3.5,6.5 H15.5 M3.5,10.5 H15.5 M7.5,2.5 V14.5 M11.5,2.5 V14.5"/></g></svg>
<svg class="r" style="left:876px;top:707px;" width="20" height="18" viewBox="0 0 20 18"><g fill="none" stroke="#555" stroke-width="1"><rect x="3.5" y="2.5" width="13" height="12"/><rect x="5.5" y="4.5" width="9" height="8"/><path d="M7.5,6.5 H12.5 M7.5,8.5 H12.5 M7.5,10.5 H12.5" stroke-width="0.8"/></g></svg>
<svg class="r" style="left:916px;top:707px;" width="20" height="18" viewBox="0 0 20 18"><g fill="none" stroke="#555" stroke-width="1"><path d="M3.5,14.5 V2.5 H16.5 V14.5 H3.5 M7.5,2.5 V8.5 H12.5 V2.5"/></g></svg>
<div class="r" style="left:952px;top:716px;width:8px;height:1px;background:#555"></div>
<div class="r" style="left:965px;top:716px;width:98px;height:1px;background:#777"></div>
<div class="r" style="left:1015px;top:712px;width:1px;height:7px;background:#777"></div>
<div class="r" style="left:1026px;top:710px;width:5px;height:12px;background:#666"></div>
<svg class="r" style="left:1068px;top:709px;" width="12" height="14" viewBox="0 0 12 14"><path d="M6,2 V12 M1.5,7 H10.5" stroke="#555" stroke-width="1"/></svg>
<div class="t" style="left:1091.70px;top:710.00px;font-size:11.5px;line-height:12.85px;color:#444444;font-weight:normal;transform:scaleX(0.8832);transform-origin:0 0;">184%</div>
<div class="r" style="left:0px;top:35px;width:1px;height:693px;background:#217346"></div>
<div class="r" style="left:1137px;top:35px;width:1px;height:693px;background:#217346"></div>
<div class="r" style="left:0px;top:727px;width:1138px;height:1px;background:#217346"></div>
</body></html>
